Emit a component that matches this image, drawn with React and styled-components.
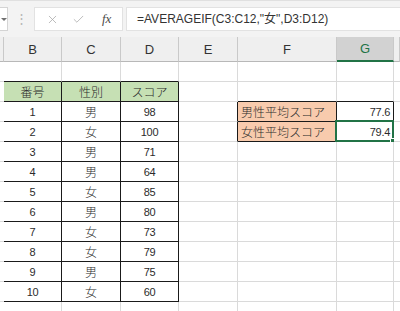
import React from "react";
import styled, { createGlobalStyle } from "styled-components";
import { X, Check } from "lucide-react";

const GlobalStyle = createGlobalStyle`
  body {
    margin: 0;
    background: #ffffff;
    font-family: "Liberation Sans", "Noto Sans CJK JP", sans-serif;
  }
`;

const COLS = [4, 58, 59, 58, 59, 99, 57, 6];
const LETTERS = ["", "B", "C", "D", "E", "F", "G", ""];
const GRID = "#dadada";
const INK = "#1a1a1a";
const GREEN = "#217346";

const Sheet = styled.div`
  width: 400px;
  height: 311px;
  overflow: hidden;
  display: flex;
  flex-direction: column;
`;

const FormulaBar = styled.div`
  height: 37px;
  flex: none;
  box-sizing: border-box;
  background: #f3f3f3;
  border-top: 1px solid #e0e0e0;
  display: flex;
  align-items: center;
`;

const NameBox = styled.div`
  width: 8px;
  height: 24px;
  box-sizing: border-box;
  background: #fff;
  border: 1px solid #d4d4d4;
  border-left: none;
  display: flex;
  align-items: center;
  padding-left: 1px;
`;

const Caret = styled.span`
  width: 0;
  height: 0;
  border-left: 3px solid transparent;
  border-right: 3px solid transparent;
  border-top: 3px solid #707070;
`;

const Grip = styled.span`
  width: 26px;
  text-align: center;
  color: #b5b5b5;
  font-size: 13px;
  line-height: 24px;
`;

const ButtonBox = styled.div`
  width: 89px;
  height: 24px;
  box-sizing: border-box;
  background: #fff;
  border: 1px solid #e2e2e2;
  display: flex;
  align-items: center;
  justify-content: space-around;
  padding: 0 4px;
`;

const FxMark = styled.span`
  font-family: "Liberation Serif", serif;
  font-style: italic;
  font-size: 13px;
  color: #4a4a4a;
  margin-left: 4px;
`;

const FormulaInput = styled.div`
  flex: 1;
  height: 24px;
  margin-left: 3px;
  box-sizing: border-box;
  background: #fff;
  border: 1px solid #e2e2e2;
  border-right: none;
  padding-left: 10px;
  font-size: 12px;
  line-height: 22px;
  color: #333;
  white-space: nowrap;
`;

const Grid = styled.div`
  display: grid;
  grid-template-columns: ${COLS.map((w) => `${w}px`).join(" ")};
  grid-template-rows: 25px repeat(13, 20px);
`;

const ColHead = styled.div`
  box-sizing: border-box;
  background: ${({ $selected }) => ($selected ? "#d2d2d2" : "#efefef")};
  border-right: 1px solid #c9c9c9;
  border-bottom: ${({ $selected }) =>
    $selected ? `2px solid ${GREEN}` : "1px solid #b8b8b8"};
  color: ${({ $selected }) => ($selected ? GREEN : "#333")};
  font-size: 13px;
  display: flex;
  align-items: center;
  justify-content: center;
`;

const Cell = styled.div`
  position: relative;
  box-sizing: border-box;
  background: ${({ $fill }) => $fill || "#fff"};
  border-right: 1px solid ${({ $right }) => $right};
  border-bottom: 1px solid ${({ $bottom }) => $bottom};
  display: flex;
  align-items: center;
  justify-content: ${({ $align }) => $align};
  padding: 0 3px;
  color: #2b2b2b;
  font-size: ${({ $num }) => ($num ? "11px" : "12px")};
  font-weight: ${({ $num }) => ($num ? 400 : 300)};
  letter-spacing: ${({ $num }) => ($num ? "-0.3px" : "0")};
  white-space: nowrap;
`;

const Selection = styled.div`
  position: absolute;
  top: -2px;
  left: -2px;
  right: -1px;
  bottom: -1px;
  border: 2px solid ${GREEN};
  pointer-events: none;
`;

const Handle = styled.div`
  position: absolute;
  right: -5px;
  bottom: -5px;
  width: 5px;
  height: 5px;
  background: ${GREEN};
  border: 1px solid #fff;
`;

const scores = [
  [1, "男", 98],
  [2, "女", 100],
  [3, "男", 71],
  [4, "男", 64],
  [5, "女", 85],
  [6, "男", 80],
  [7, "女", 73],
  [8, "女", 79],
  [9, "男", 75],
  [10, "女", 60],
];

function cellContent(row, col) {
  if (row === 2 && col >= 1 && col <= 3) {
    return { text: ["番号", "性別", "スコア"][col - 1], fill: "#c6e0b4", align: "center" };
  }
  if (row >= 3 && row <= 12 && col >= 1 && col <= 3) {
    const v = scores[row - 3][col - 1];
    return { text: v, align: "center", num: typeof v === "number" };
  }
  if (col === 5 && (row === 3 || row === 4)) {
    return { text: row === 3 ? "男性平均スコア" : "女性平均スコア", fill: "#f8cbad", align: "flex-start" };
  }
  if (col === 6 && (row === 3 || row === 4)) {
    return { text: row === 3 ? "77.6" : "79.4", align: "flex-end", num: true };
  }
  return { text: "", align: "center" };
}

function rightLine(row, col) {
  if (col <= 3 && row >= 2 && row <= 12) return INK;
  if (col >= 4 && col <= 6 && (row === 3 || row === 4)) return INK;
  return GRID;
}

function bottomLine(row, col) {
  if (col >= 1 && col <= 3 && row >= 1 && row <= 12) return INK;
  if ((col === 5 || col === 6) && row >= 2 && row <= 4) return INK;
  return GRID;
}

const App = () => {
  const rows = Array.from({ length: 13 }, (_, i) => i + 1);

  return (
    <Sheet>
      <GlobalStyle />
      <FormulaBar>
        <NameBox>
          <Caret />
        </NameBox>
        <Grip>⋮</Grip>
        <ButtonBox>
          <X size={13} strokeWidth={1.4} color="#a8a8a8" />
          <Check size={13} strokeWidth={1.4} color="#a8a8a8" />
          <FxMark>fx</FxMark>
        </ButtonBox>
        <FormulaInput>=AVERAGEIF(C3:C12,"女",D3:D12)</FormulaInput>
      </FormulaBar>
      <Grid>
        {LETTERS.map((l, c) => (
          <ColHead key={`h${c}`} $selected={l === "G"}>
            {l}
          </ColHead>
        ))}
        {rows.map((r) =>
          COLS.map((_, c) => {
            const cell = cellContent(r, c);
            return (
              <Cell
                key={`${r}-${c}`}
                $fill={cell.fill}
                $align={cell.align}
                $num={cell.num}
                $right={rightLine(r, c)}
                $bottom={bottomLine(r, c)}
              >
                {cell.text}
                {r === 4 && c === 6 && (
                  <Selection>
                    <Handle />
                  </Selection>
                )}
              </Cell>
            );
          })
        )}
      </Grid>
    </Sheet>
  );
};

export default App;
